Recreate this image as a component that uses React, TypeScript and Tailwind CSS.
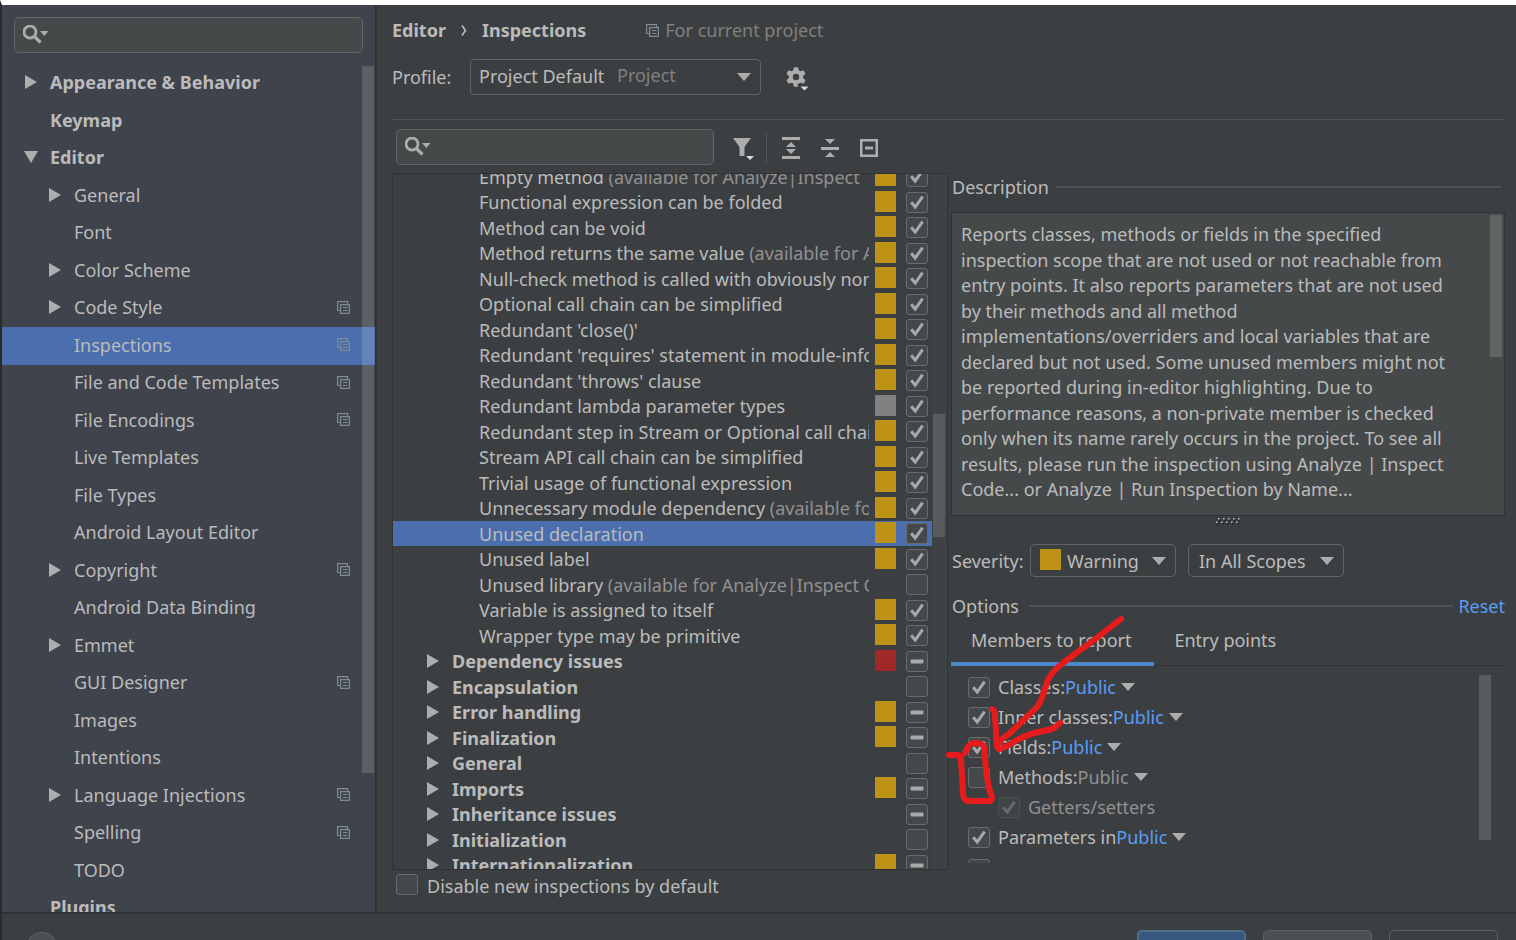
import React, { useEffect, useRef } from "react";

type CheckState = "on" | "off" | "mixed";

const triRight = "M1 0L13 7L1 14Z";
const triDown = "M0 1H14L7 13Z";

function Triangle({ open }: { open?: boolean }) {
  return (
    <svg width="14" height="14" viewBox="0 0 14 14" className="shrink-0" aria-hidden="true">
      <path d={open ? triDown : triRight} fill="#adadad" />
    </svg>
  );
}

function Caret({ className = "" }: { className?: string }) {
  return (
    <svg width="14" height="8" viewBox="0 0 14 8" className={`shrink-0 ${className}`} aria-hidden="true">
      <path d="M0 0H14L7 8Z" fill="#adadad" />
    </svg>
  );
}

function CopyIcon() {
  return (
    <svg width="13" height="13" viewBox="0 0 13 13" className="shrink-0" fill="none" stroke="#7f8b91" strokeWidth="1.2" aria-hidden="true">
      <path d="M3 9.5H.6V.6H10.5V3" />
      <path d="M3.6 3.6H12.4V12.4H3.6Z M6 6.5H10.5 M6 9.5H10.5" />
    </svg>
  );
}

function Check({
  state,
  id,
  label,
  disabled,
}: {
  state: CheckState;
  id?: string;
  label?: string;
  disabled?: boolean;
}) {
  const ref = useRef<HTMLInputElement>(null);
  useEffect(() => {
    if (ref.current) ref.current.indeterminate = state === "mixed";
  }, [state]);
  return (
    <span className={`relative block h-[21px] w-[22px] shrink-0 ${disabled ? "opacity-40" : ""}`}>
      <input
        ref={ref}
        id={id}
        aria-label={label}
        type="checkbox"
        disabled={disabled}
        defaultChecked={state === "on"}
        className="peer block h-full w-full appearance-none rounded-[3px] border border-[#6b6b6b] bg-[#43494a]"
      />
      <svg
        viewBox="0 0 22 21"
        className="pointer-events-none absolute inset-0 hidden h-full w-full peer-checked:block"
        aria-hidden="true"
      >
        <path d="M5.2 10.2L9.2 15L16.6 4.6" fill="none" stroke="#a9a9a9" strokeWidth="3" />
      </svg>
      <svg
        viewBox="0 0 22 21"
        className="pointer-events-none absolute inset-0 hidden h-full w-full peer-indeterminate:block"
        aria-hidden="true"
      >
        <rect x="4.5" y="8.5" width="13" height="4" rx="1" fill="#a9a9a9" />
      </svg>
    </span>
  );
}

function SearchBox({ label }: { label: string }) {
  return (
    <div className="flex h-9 w-full items-center rounded-[5px] border border-[#646464] bg-[#45494a] pl-2">
      <svg width="28" height="20" viewBox="0 0 28 20" className="shrink-0" aria-hidden="true">
        <circle cx="7" cy="7" r="6" fill="none" stroke="#adadad" strokeWidth="2.8" />
        <path d="M11.3 11.3L17.5 17.5" stroke="#adadad" strokeWidth="3.2" />
        <path d="M17 6H25.5L21.25 11Z" fill="#adadad" />
      </svg>
      <input type="search" aria-label={label} className="min-w-0 flex-1 bg-transparent px-1 outline-none" />
    </div>
  );
}

interface NavItem {
  name: string;
  level: 0 | 1;
  arrow?: "closed" | "open";
  project?: boolean;
  selected?: boolean;
}

const nav: NavItem[] = [
  { name: "Appearance & Behavior", level: 0, arrow: "closed" },
  { name: "Keymap", level: 0 },
  { name: "Editor", level: 0, arrow: "open" },
  { name: "General", level: 1, arrow: "closed" },
  { name: "Font", level: 1 },
  { name: "Color Scheme", level: 1, arrow: "closed" },
  { name: "Code Style", level: 1, arrow: "closed", project: true },
  { name: "Inspections", level: 1, project: true, selected: true },
  { name: "File and Code Templates", level: 1, project: true },
  { name: "File Encodings", level: 1, project: true },
  { name: "Live Templates", level: 1 },
  { name: "File Types", level: 1 },
  { name: "Android Layout Editor", level: 1 },
  { name: "Copyright", level: 1, arrow: "closed", project: true },
  { name: "Android Data Binding", level: 1 },
  { name: "Emmet", level: 1, arrow: "closed" },
  { name: "GUI Designer", level: 1, project: true },
  { name: "Images", level: 1 },
  { name: "Intentions", level: 1 },
  { name: "Language Injections", level: 1, arrow: "closed", project: true },
  { name: "Spelling", level: 1, project: true },
  { name: "TODO", level: 1 },
  { name: "Plugins", level: 0 },
];

function Sidebar() {
  return (
    <nav aria-label="Settings" className="relative flex w-[375px] shrink-0 flex-col overflow-hidden border-r-2 border-[#323232] bg-[#3f434c]">
      <div className="px-3 pt-3">
        <SearchBox label="Search settings" />
      </div>
      <ul className="mt-3 shrink-0">
        {nav.map((item) => (
          <li key={item.name} className="odd:h-[37px] even:h-[38px]">
            <a
              href="#"
              aria-current={item.selected ? "page" : undefined}
              className={`flex h-full items-center pr-[25px] pb-[3px] ${item.level === 0 ? "pl-[22px] font-bold" : "pl-[46px]"} ${
                item.selected ? "bg-[#4b6eaf]" : ""
              }`}
            >
              <span className="w-[26px] shrink-0">{item.arrow && <Triangle open={item.arrow === "open"} />}</span>
              <span className="flex-1 whitespace-nowrap">{item.name}</span>
              {item.project && <CopyIcon />}
            </a>
          </li>
        ))}
      </ul>
      <div className="absolute top-[61px] right-px h-[707px] w-3 bg-white/15" />
    </nav>
  );
}

const severityColor = {
  warning: "bg-[#be9117]",
  error: "bg-[#9e2927]",
  info: "bg-[#808080]",
  none: "",
};

interface Row {
  name: string;
  note?: string;
  severity: keyof typeof severityColor;
  state: CheckState;
  group?: boolean;
  selected?: boolean;
}

const leaf = (name: string, extra: Partial<Row> = {}): Row => ({ name, severity: "warning", state: "on", ...extra });
const group = (name: string, severity: Row["severity"], state: CheckState): Row => ({ name, severity, state, group: true });

const rows: Row[] = [
  leaf("Empty method", { note: "(available for Analyze|Inspect" }),
  leaf("Functional expression can be folded"),
  leaf("Method can be void"),
  leaf("Method returns the same value", { note: "(available for Analyze|Inspect Code)" }),
  leaf("Null-check method is called with obviously non-null argument"),
  leaf("Optional call chain can be simplified"),
  leaf("Redundant 'close()'"),
  leaf("Redundant 'requires' statement in module-info"),
  leaf("Redundant 'throws' clause"),
  leaf("Redundant lambda parameter types", { severity: "info" }),
  leaf("Redundant step in Stream or Optional call chain"),
  leaf("Stream API call chain can be simplified"),
  leaf("Trivial usage of functional expression"),
  leaf("Unnecessary module dependency", { note: "(available for Analyze|Inspect Code)" }),
  leaf("Unused declaration", { selected: true }),
  leaf("Unused label"),
  leaf("Unused library", { note: "(available for Analyze|Inspect Code)", severity: "none", state: "off" }),
  leaf("Variable is assigned to itself"),
  leaf("Wrapper type may be primitive"),
  group("Dependency issues", "error", "mixed"),
  group("Encapsulation", "none", "off"),
  group("Error handling", "warning", "mixed"),
  group("Finalization", "warning", "mixed"),
  group("General", "none", "off"),
  group("Imports", "warning", "mixed"),
  group("Inheritance issues", "none", "mixed"),
  group("Initialization", "none", "off"),
  group("Internationalization", "warning", "mixed"),
];

function InspectionTree() {
  return (
    <div className="relative min-h-0 flex-1 overflow-hidden border border-[#323232]">
      <ul className="-mt-[10px] pr-[15px]">
        {rows.map((row, i) => (
          <li
            key={row.name}
            className={`flex items-center pr-1 odd:h-[25px] even:h-[26px] ${row.group ? "pl-[33px]" : "pl-[86px]"} ${
              row.selected ? "bg-[#4b6eaf]" : ""
            }`}
          >
            {row.group && (
              <span className="w-[26px] shrink-0">
                <Triangle />
              </span>
            )}
            <label
              htmlFor={`inspection-${i}`}
              className={`mr-[6px] min-w-0 flex-1 overflow-hidden whitespace-nowrap ${row.group ? "font-bold" : ""}`}
            >
              {row.name}
              {row.note && <span className="text-[#919191]"> {row.note}</span>}
            </label>
            <span className={`mr-[10px] mb-[2px] h-[21px] w-[21px] shrink-0 ${severityColor[row.severity]}`} />
            <Check id={`inspection-${i}`} state={row.state} />
          </li>
        ))}
      </ul>
      <div className="absolute inset-y-0 right-0 w-[15px] bg-[#3f4244]" />
      <div className="absolute top-[240px] right-[2px] h-[123px] w-3 bg-[#595b5d]" />
    </div>
  );
}

function ToolButton({ label, children }: { label: string; children: React.ReactNode }) {
  return (
    <button type="button" aria-label={label} className="flex h-6 w-6 shrink-0 items-center justify-center">
      {children}
    </button>
  );
}

function GearIcon() {
  return (
    <svg width="24" height="26" viewBox="0 0 24 26" aria-hidden="true">
      <g transform="translate(11 12)" fill="#adadad">
        <circle r="5.2" fill="none" stroke="#adadad" strokeWidth="4" />
        {[0, 60, 120, 180, 240, 300].map((a) => (
          <path key={a} d="M-3 -6L-2 -9.8H2L3 -6Z" transform={`rotate(${a})`} />
        ))}
      </g>
      <path d="M14 20H24L19 25.5Z" fill="#3c3f41" stroke="#3c3f41" strokeWidth="2" />
      <path d="M15.5 21.5H23.5L19.5 25.5Z" fill="#dcdcdc" />
    </svg>
  );
}

function Toolbar() {
  return (
    <div className="flex items-center pl-1">
      <div className="w-[318px] shrink-0">
        <SearchBox label="Search inspections" />
      </div>
      <div className="ml-4 flex items-center pt-[2px]">
        <ToolButton label="Filter inspections">
          <svg width="24" height="24" viewBox="0 0 24 24" className="shrink-0" aria-hidden="true">
            <path d="M3 2H21L14.5 11V20H9.5V11Z" fill="#adadad" />
            <path d="M14 18H24L19 24Z" fill="#3c3f41" />
            <path d="M16 20H24L20 24Z" fill="#dcdcdc" />
          </svg>
        </ToolButton>
        <span className="mx-3 h-[30px] w-px bg-[#555555]" />
        <div className="flex gap-[15px]">
          <ToolButton label="Expand all">
            <svg width="18" height="22" viewBox="0 0 18 22" fill="#adadad" aria-hidden="true">
              <path d="M0 0H18V3H0Z M0 19H18V22H0Z M9 5L14 10H4Z M9 17L14 12H4Z" />
            </svg>
          </ToolButton>
          <ToolButton label="Collapse all">
            <svg width="18" height="18" viewBox="0 0 18 18" fill="#adadad" aria-hidden="true">
              <path d="M0 8H18V11H0Z M9 5L14 0H4Z M9 13L14 18H4Z" />
            </svg>
          </ToolButton>
          <ToolButton label="Reset to empty">
            <svg width="18" height="18" viewBox="0 0 18 18" aria-hidden="true">
              <rect x="1.25" y="1.25" width="15.5" height="15.5" fill="none" stroke="#adadad" strokeWidth="2.5" />
              <path d="M5 7.5H13V10.5H5Z" fill="#adadad" />
            </svg>
          </ToolButton>
        </div>
      </div>
    </div>
  );
}

const description = [
  "Reports classes, methods or fields in the specified",
  "inspection scope that are not used or not reachable from",
  "entry points. It also reports parameters that are not used",
  "by their methods and all method",
  "implementations/overriders and local variables that are",
  "declared but not used. Some unused members might not",
  "be reported during in-editor highlighting. Due to",
  "performance reasons, a non-private member is checked",
  "only when its name rarely occurs in the project. To see all",
  "results, please run the inspection using Analyze | Inspect",
  "Code... or Analyze | Run Inspection by Name...",
];

interface Member {
  name: string;
  scope?: string;
  state: CheckState;
  muted?: boolean;
  nested?: boolean;
}

const members: Member[] = [
  { name: "Classes:", scope: "Public", state: "on" },
  { name: "Inner classes:", scope: "Public", state: "on" },
  { name: "Fields:", scope: "Public", state: "on" },
  { name: "Methods:", scope: "Public", state: "off", muted: true },
  { name: "Getters/setters", state: "on", nested: true },
  { name: "Parameters in", scope: "Public", state: "on" },
];

function Details() {
  return (
    <section className="relative flex min-w-0 flex-1 flex-col pr-[11px] pl-[3px]">
      <div className="mt-[13px] flex h-7 items-center pl-px pr-1">
        <h2>Description</h2>
        <div className="ml-[7px] h-[2px] flex-1 bg-[#515151]" />
      </div>
      <div className="relative mt-[11px] h-[304px] shrink-0 border border-[#323232] bg-[#45494a] py-[9px] pl-[9px]">
        <p>
          {description.map((line) => (
            <span key={line} className="block whitespace-nowrap odd:h-[25px] odd:leading-[25px] even:h-[26px] even:leading-[26px]">
              {line}{" "}
            </span>
          ))}
        </p>
        <div className="absolute top-[2px] right-[2px] h-[142px] w-3 bg-[#606364]" />
      </div>
      <svg width="24" height="7" viewBox="0 0 24 7" className="mt-[2px] shrink-0 self-center" aria-hidden="true">
        {[0, 1, 2, 3, 4].map((n) => (
          <g key={n}>
            <path d={`M${n * 5 + 2} 0h1.5v1.5h-1.5z M${n * 5} 3.5h1.5v1.5h-1.5z`} fill="#bbbbbb" />
            <path d={`M${n * 5 + 3} 2h1.5v1.5h-1.5z M${n * 5 + 1} 5h1.5v1.5h-1.5z`} fill="#1e1e1e" />
          </g>
        ))}
      </svg>
      <div className="mt-[19px] flex h-[33px] shrink-0 items-center pl-px">
        <label htmlFor="severity" className="w-[78px]">
          Severity:
        </label>
        <div className="relative h-[33px] w-[146px]">
          <select
            id="severity"
            className="h-full w-full appearance-none rounded-[5px] border border-[#646464] bg-[#3c3f41] pl-9 outline-none"
          >
            <option>Warning</option>
          </select>
          <span className="pointer-events-none absolute top-[5px] left-[10px] h-[21px] w-[21px] bg-[#be9117]" />
          <Caret className="pointer-events-none absolute top-[13px] right-[10px]" />
        </div>
        <div className="relative ml-3 h-[33px] w-[156px]">
          <select
            aria-label="Scope"
            className="h-full w-full appearance-none rounded-[5px] border border-[#646464] bg-[#3c3f41] pl-[10px] outline-none"
          >
            <option>In All Scopes</option>
          </select>
          <Caret className="pointer-events-none absolute top-[13px] right-[10px]" />
        </div>
      </div>
      <div className="mt-[15px] flex h-7 shrink-0 items-center pl-px">
        <h2>Options</h2>
        <div className="mr-[5px] ml-[10px] h-[2px] flex-1 bg-[#515151]" />
        <a href="#" className="text-[#589df6]">
          Reset
        </a>
      </div>
      <div role="tablist" className="flex h-[46px] shrink-0 border-b border-[#323232]">
        <button
          type="button"
          role="tab"
          aria-selected="true"
          className="h-[46px] border-b-4 border-[#4a88c7] pr-[23px] pb-[3px] pl-5 whitespace-nowrap"
        >
          Members to report
        </button>
        <button type="button" role="tab" aria-selected="false" className="h-[46px] px-5 pb-[7px] whitespace-nowrap">
          Entry points
        </button>
      </div>
      <div className="relative mt-[6px] h-[191px] shrink-0 overflow-hidden">
        <ul>
          {members.map((m, i) => (
            <li key={m.name} className={`flex h-[30px] items-center ${m.nested ? "pl-[47px]" : "pl-[17px]"}`}>
              <Check id={`member-${i}`} state={m.state} disabled={m.nested} />
              <label htmlFor={`member-${i}`} className={`ml-2 ${m.nested ? "text-[#919191]" : ""}`}>
                {m.name}
              </label>
              {m.scope && (
                <button
                  type="button"
                  aria-haspopup="menu"
                  className={`flex items-center gap-[5px] ${m.muted ? "text-[#919191]" : "text-[#589df6]"}`}
                >
                  {m.scope}
                  <Caret />
                </button>
              )}
            </li>
          ))}
          <li className="flex items-start pt-[7px] pl-[17px]">
            <Check state="off" label="Parameters" />
          </li>
        </ul>
        <div className="absolute top-[3px] right-[14px] h-[165px] w-3 bg-[#595b5d]" />
      </div>
      <svg
        width="180"
        height="194"
        viewBox="945 613 180 194"
        className="pointer-events-none absolute top-[453px] -left-[3px]"
        fill="none"
        stroke="#e61c1c"
        strokeWidth="6"
        strokeLinecap="round"
        strokeLinejoin="round"
        aria-hidden="true"
      >
        <path d="M1121 619L1090 643Q1069 658 1058 667Q1049 676 1047 682Q1042 702 1036 708L1009 734Q1002 738 1000 742" />
        <path d="M992 709Q995 710 995 716L996 733Q996 750 1000 749Q1006 747 1012 743Q1023 736 1034 733Q1050 730 1054 728L1060 723" />
        <path d="M965 753Q968 743 975 743Q983 743 984 747L985 757Q986 774 988 783Q989 790 992 797Q992 802 988 801L968 801Q963 800 963 793L961 760Q961 755 957 755L949 755" />
      </svg>
    </section>
  );
}

export default function App() {
  return (
    <div className="flex h-screen w-full flex-col overflow-hidden border-t-[5px] border-l-2 border-t-white border-l-[#2b2b2b] bg-[#3c3f41] font-['Noto_Sans',sans-serif] text-[18px] leading-6 text-[#bbbbbb]">
      <div className="flex min-h-0 flex-1">
        <Sidebar />
        <main className="flex min-w-0 flex-1 flex-col pl-[15px]">
          <header className="pr-[11px]">
            <div className="flex h-[50px] items-center font-bold">
              <span>Editor</span>
              <svg width="6" height="11" viewBox="0 0 6 11" className="mx-[15px]" aria-hidden="true">
                <path d="M1 .5L4.5 5.5L1 10.5" fill="none" stroke="#bbbbbb" strokeWidth="1.6" />
              </svg>
              <h1>Inspections</h1>
              <span className="ml-[60px] flex items-center gap-[6px] font-normal text-[#808080]">
                <CopyIcon />
                For current project
              </span>
            </div>
            <div className="mt-1 flex h-9 items-center">
              <label htmlFor="profile" className="w-[78px]">
                Profile:
              </label>
              <div className="relative h-9 w-[291px]">
                <select
                  id="profile"
                  className="h-full w-full appearance-none rounded-[4px] border border-[#646464] bg-[#3c3f41] pb-[2px] pl-2 outline-none"
                >
                  <option>Project Default</option>
                </select>
                <span className="pointer-events-none absolute top-1 left-[147px] text-[#808080]">Project</span>
                <Caret className="pointer-events-none absolute top-[14px] right-[10px]" />
              </div>
              <button type="button" aria-label="Profile actions" className="ml-6 pt-[2px]">
                <GearIcon />
              </button>
            </div>
            <div className="mt-6 h-px bg-[#515151]" />
          </header>
          <div className="flex min-h-0 flex-1">
            <div className="flex w-[556px] shrink-0 flex-col pt-[9px]">
              <Toolbar />
              <div className="mt-2 flex min-h-0 flex-1 flex-col">
                <InspectionTree />
              </div>
              <div className="flex h-[42px] shrink-0 items-start pt-1 pl-1">
                <Check id="disable-new" state="off" />
                <label htmlFor="disable-new" className="ml-[9px]">
                  Disable new inspections by default
                </label>
              </div>
            </div>
            <div className="flex min-w-0 flex-1 pt-[40px]">
              <Details />
            </div>
          </div>
        </main>
      </div>
      <footer className="flex h-7 shrink-0 items-start overflow-hidden border-t-2 border-[#323232] pr-[18px] pl-6">
        <button type="button" aria-label="Help" className="mt-[18px] h-8 w-8 shrink-0 rounded-full border border-[#646464] bg-[#4c5052]" />
        <div className="ml-auto flex gap-[17px] pt-4">
          <button type="button" aria-label="OK" className="h-9 w-[109px] rounded-[5px] border-2 border-[#4c708c] bg-[#365880]" />
          <button type="button" aria-label="Cancel" className="h-9 w-[109px] rounded-[5px] border border-[#5e6060] bg-[#4c5052]" />
          <button type="button" aria-label="Apply" className="h-9 w-[109px] rounded-[5px] border border-[#5e6060]" />
        </div>
      </footer>
    </div>
  );
}
